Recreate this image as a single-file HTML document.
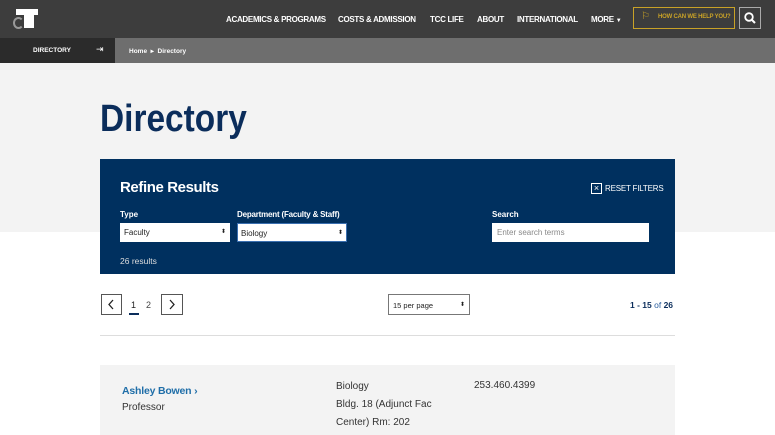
<!DOCTYPE html>
<html><head><style>
*{margin:0;padding:0;box-sizing:border-box}
body{width:775px;height:435px;overflow:hidden;font-family:"Liberation Sans",sans-serif;background:#fff;position:relative}
.a{position:absolute}
.nav{font-size:8px;font-weight:bold;color:#fff;top:15px;letter-spacing:-0.3px;white-space:nowrap}
</style></head><body>
<div class="a" style="left:0;top:0;width:775px;height:38px;background:#3d3d3d"></div>
<div class="a" style="left:16px;top:9px;width:22px;height:6px;background:#fff"></div>
<div class="a" style="left:24px;top:9px;width:10px;height:19px;background:#fff"></div>
<div class="a" style="left:13px;top:17px;width:11px;height:12px;border:2px solid #999;border-radius:50%;border-right-color:transparent"></div>
<div class="a nav" style="left:226px">ACADEMICS &amp; PROGRAMS</div>
<div class="a nav" style="left:338px">COSTS &amp; ADMISSION</div>
<div class="a nav" style="left:430px">TCC LIFE</div>
<div class="a nav" style="left:477px">ABOUT</div>
<div class="a nav" style="left:517px">INTERNATIONAL</div>
<div class="a nav" style="left:591px">MORE <span style="font-size:6px">▼</span></div>
<div class="a" style="left:633px;top:7px;width:102px;height:22px;border:1px solid #c9a227"></div>
<div class="a" style="left:641px;top:11px;color:#c9a227;font-size:10px">⚐</div>
<div class="a" style="left:658px;top:14px;color:#c9a227;font-size:6px;font-weight:bold;letter-spacing:-0.2px;white-space:nowrap">HOW CAN WE HELP YOU?</div>
<div class="a" style="left:739px;top:7px;width:22px;height:22px;border:1px solid #aaa"></div>
<svg class="a" style="left:744px;top:12px" width="12" height="12" viewBox="0 0 12 12"><circle cx="5" cy="5" r="3.8" fill="none" stroke="#fff" stroke-width="1.8"/><line x1="8" y1="8" x2="11" y2="11" stroke="#fff" stroke-width="2"/></svg>
<div class="a" style="left:0;top:38px;width:115px;height:25px;background:#2b2b2b"></div>
<div class="a" style="left:115px;top:38px;width:660px;height:25px;background:#6e6e6e"></div>
<div class="a" style="left:33px;top:47px;color:#fff;font-size:6.5px;font-weight:bold">DIRECTORY</div>
<div class="a" style="left:96px;top:44px;color:#fff;font-size:9px">⇥</div>
<div class="a" style="left:129px;top:47px;color:#fff;font-size:6.5px;font-weight:bold">Home &nbsp;▸&nbsp; Directory</div>
<div class="a" style="left:0;top:63px;width:775px;height:169px;background:#f3f3f3"></div>
<div class="a" style="left:100px;top:98px;font-size:38px;font-weight:bold;color:#0b2d5b;transform:scaleX(0.88);transform-origin:left">Directory</div>
<div class="a" style="left:100px;top:159px;width:575px;height:115px;background:#00305f"></div>
<div class="a" style="left:120px;top:179px;font-size:15px;font-weight:bold;color:#fff;letter-spacing:-0.4px">Refine Results</div>
<div class="a" style="left:591px;top:183px;width:11px;height:11px;border:1px solid #fff;color:#fff;font-size:9px;line-height:9px;text-align:center">×</div>
<div class="a" style="left:605px;top:184px;font-size:8px;color:#fff;letter-spacing:-0.2px">RESET FILTERS</div>
<div class="a" style="left:120px;top:210px;font-size:8px;font-weight:bold;color:#fff">Type</div>
<div class="a" style="left:237px;top:210px;font-size:8px;font-weight:bold;color:#fff;letter-spacing:-0.2px">Department (Faculty &amp; Staff)</div>
<div class="a" style="left:492px;top:210px;font-size:8px;font-weight:bold;color:#fff">Search</div>
<div class="a" style="left:120px;top:223px;width:110px;height:19px;background:#fff;font-size:8px;padding:5px 4px;color:#222">Faculty<span style="float:right;font-size:6px">⬍</span></div>
<div class="a" style="left:237px;top:223px;width:110px;height:19px;background:#fff;border:1px solid #3a6fb0;font-size:8px;padding:5px 3px;color:#222">Biology<span style="float:right;font-size:6px">⬍</span></div>
<div class="a" style="left:492px;top:223px;width:157px;height:19px;background:#fff;font-size:8px;padding:5px 5px;color:#888">Enter search terms</div>
<div class="a" style="left:120px;top:256px;font-size:8.5px;color:#ddd">26 results</div>
<svg class="a" style="left:101px;top:294px" width="21" height="21"><rect x=".5" y=".5" width="20" height="20" fill="none" stroke="#555"/><path d="M12 6L8 10.5L12 15" fill="none" stroke="#222" stroke-width="1.3"/></svg>
<div class="a" style="left:131px;top:300px;font-size:9px;color:#222">1</div>
<div class="a" style="left:129px;top:313px;width:10px;height:2px;background:#0b2d5b"></div>
<div class="a" style="left:146px;top:300px;font-size:9px;color:#444">2</div>
<svg class="a" style="left:161px;top:294px" width="22" height="21"><rect x=".5" y=".5" width="21" height="20" fill="none" stroke="#555"/><path d="M9 6L13 10.5L9 15" fill="none" stroke="#222" stroke-width="1.3"/></svg>
<div class="a" style="left:388px;top:294px;width:82px;height:21px;border:1px solid #777;font-size:7.5px;padding:6px 4px;color:#222">15 per page<span style="float:right;font-size:6px">⬍</span></div>
<div class="a" style="left:630px;top:300px;font-size:8.5px;font-weight:bold;color:#0b2d5b">1 - 15 <span style="font-weight:normal;color:#2a5e9e">of</span> 26</div>
<div class="a" style="left:100px;top:335px;width:575px;height:1px;background:#ddd"></div>
<div class="a" style="left:100px;top:365px;width:575px;height:70px;background:#f3f3f3"></div>
<div class="a" style="left:122px;top:385px;font-size:10.5px;font-weight:bold;color:#1f6ea8;letter-spacing:-0.2px">Ashley Bowen ›</div>
<div class="a" style="left:122px;top:402px;font-size:10px;color:#333">Professor</div>
<div class="a" style="left:336px;top:378px;font-size:10px;color:#333;line-height:18px">Biology<br>Bldg. 18 (Adjunct Fac<br>Center) Rm: 202</div>
<div class="a" style="left:474px;top:380px;font-size:10px;color:#333">253.460.4399</div>
</body></html>
